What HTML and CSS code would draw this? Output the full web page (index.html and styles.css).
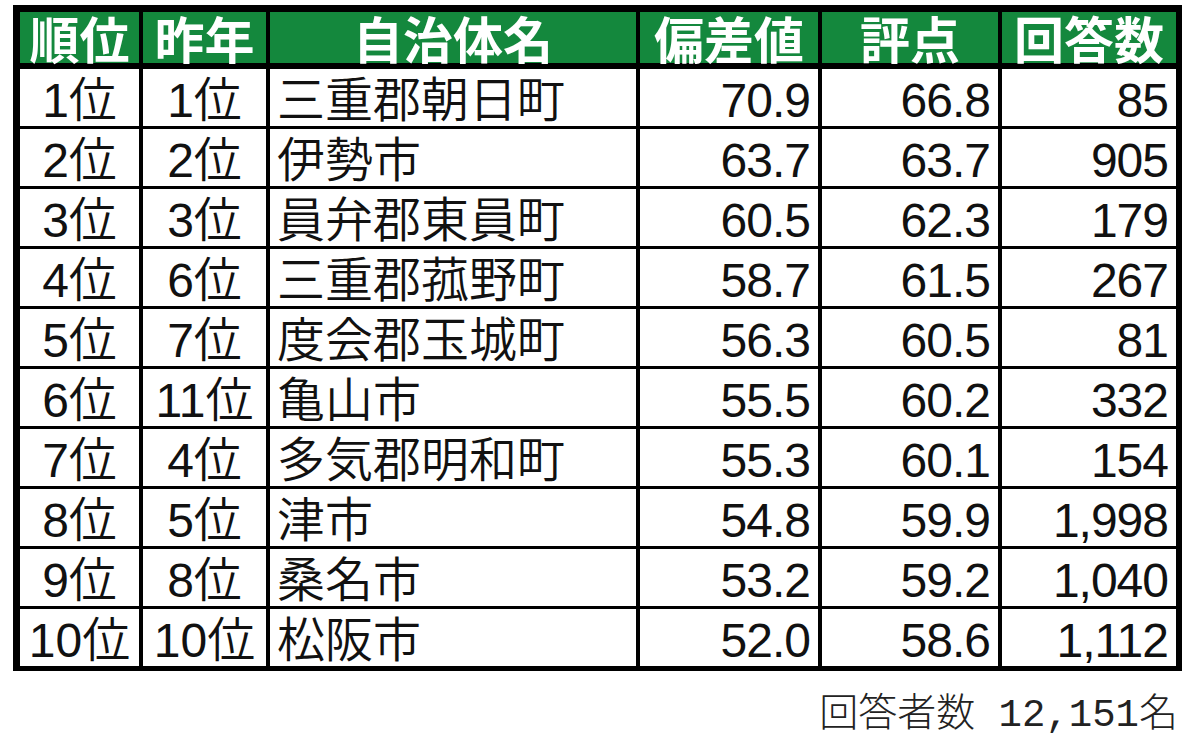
FILE: index.html
```html
<!DOCTYPE html>
<html lang="ja">
<head>
<meta charset="utf-8">
<title>三重県 住み続けたい街ランキング</title>
<link rel="stylesheet" href="styles.css">
</head>
<body>
<div class="page">
  <div class="sheet">
    <div class="hd">順位</div>
    <div class="hd">昨年</div>
    <div class="hd">自治体名</div>
    <div class="hd">偏差値</div>
    <div class="hd">評点</div>
    <div class="hd">回答数</div>

    <div class="c ctr">1位</div><div class="c ctr">1位</div><div class="c name">三重郡朝日町</div><div class="c num">70.9</div><div class="c num">66.8</div><div class="c num">85</div>
    <div class="c ctr">2位</div><div class="c ctr">2位</div><div class="c name">伊勢市</div><div class="c num">63.7</div><div class="c num">63.7</div><div class="c num">905</div>
    <div class="c ctr">3位</div><div class="c ctr">3位</div><div class="c name">員弁郡東員町</div><div class="c num">60.5</div><div class="c num">62.3</div><div class="c num">179</div>
    <div class="c ctr">4位</div><div class="c ctr">6位</div><div class="c name">三重郡菰野町</div><div class="c num">58.7</div><div class="c num">61.5</div><div class="c num">267</div>
    <div class="c ctr">5位</div><div class="c ctr">7位</div><div class="c name">度会郡玉城町</div><div class="c num">56.3</div><div class="c num">60.5</div><div class="c num">81</div>
    <div class="c ctr">6位</div><div class="c ctr">11位</div><div class="c name">亀山市</div><div class="c num">55.5</div><div class="c num">60.2</div><div class="c num">332</div>
    <div class="c ctr">7位</div><div class="c ctr">4位</div><div class="c name">多気郡明和町</div><div class="c num">55.3</div><div class="c num">60.1</div><div class="c num">154</div>
    <div class="c ctr">8位</div><div class="c ctr">5位</div><div class="c name">津市</div><div class="c num">54.8</div><div class="c num">59.9</div><div class="c num">1,998</div>
    <div class="c ctr">9位</div><div class="c ctr">8位</div><div class="c name">桑名市</div><div class="c num">53.2</div><div class="c num">59.2</div><div class="c num">1,040</div>
    <div class="c ctr">10位</div><div class="c ctr">10位</div><div class="c name">松阪市</div><div class="c num">52.0</div><div class="c num">58.6</div><div class="c num">1,112</div>
  </div>
  <div class="note">回答者数 12,151名</div>
</div>
</body>
</html>
```

FILE: styles.css
```css
html, body {
  margin: 0;
  padding: 0;
  background: #ffffff;
}

.page {
  width: 1169px;
  margin: 5px 0 0 13px;
}

.sheet {
  display: grid;
  grid-template-columns: 119px 123px 366px 178px 176px 174px;
  grid-template-rows: 54px repeat(10, 57px);
  column-gap: 4px;
  row-gap: 3px;
  padding: 7px 6px 5px 7px;
  background: #000000;
}

.hd {
  align-self: start;
  height: 51px;
  margin-bottom: 3px;
  background: #14883d;
  color: #ffffff;
  font-family: "Noto Sans CJK JP", sans-serif;
  font-weight: 700;
  font-size: 50px;
  line-height: 51px;
  text-align: center;
  white-space: nowrap;
  overflow: visible;
}

.c {
  box-sizing: border-box;
  height: 57px;
  padding-top: 6px;
  background: #ffffff;
  color: #111111;
  font-family: "Liberation Sans", "Noto Sans CJK JP", sans-serif;
  font-weight: 350;
  font-size: 48px;
  line-height: 51px;
  white-space: nowrap;
  overflow: visible;
}

.ctr {
  text-align: center;
}

.name {
  text-align: left;
  padding-left: 7px;
}

.num {
  text-align: right;
  padding-right: 8px;
  letter-spacing: -1px;
}

.note {
  margin-top: 26px;
  padding-right: 4px;
  text-align: right;
  color: #222222;
  font-family: "Liberation Mono", "Noto Sans CJK JP", monospace;
  font-weight: 300;
  font-size: 39px;
  line-height: 39px;
  white-space: pre;
}
```
